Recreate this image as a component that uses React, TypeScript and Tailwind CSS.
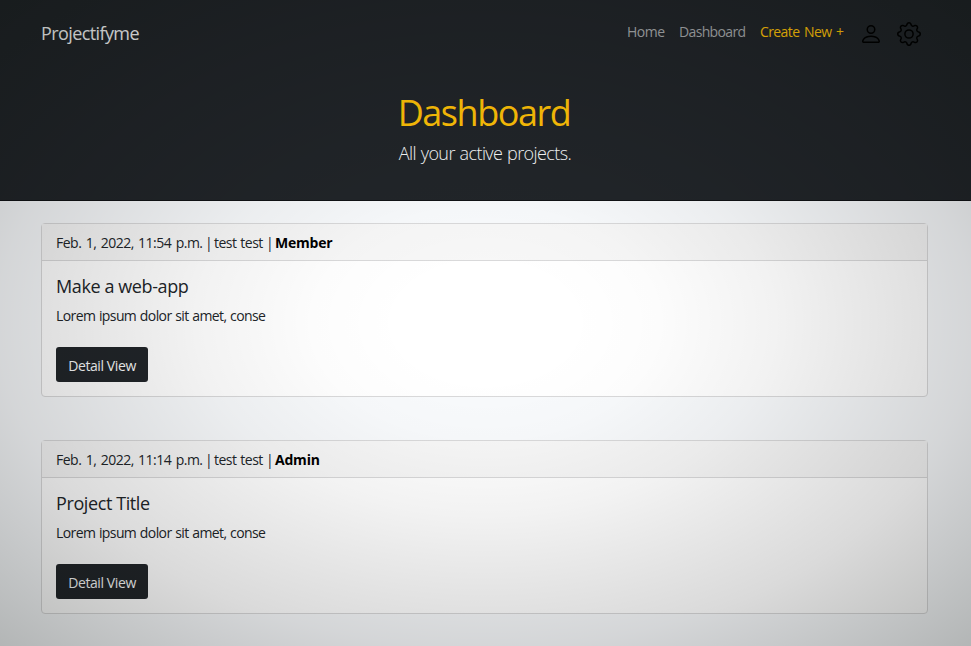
import { BsGear, BsPerson } from "react-icons/bs";

type Project = { date: string; owner: string; role: string; title: string };

const projects: Project[] = [
  { date: "Feb. 1, 2022, 11:54 p.m.", owner: "test test", role: "Member", title: "Make a web-app" },
  { date: "Feb. 1, 2022, 11:14 p.m.", owner: "test test", role: "Admin", title: "Project Title" },
];

function Header() {
  return (
    <header className="h-[201px] border-b border-[#101215] bg-[#212529] pl-[41px] pr-[50px]">
      <nav className="flex h-[66px] items-center justify-between">
        <a className="text-[18px] leading-[27px] tracking-[-0.6px] whitespace-nowrap text-[#f8f9fa]">Projectifyme</a>
        <div className="flex items-center text-[14px] leading-[21px] tracking-[-0.5px] whitespace-nowrap text-[#a5a8aa]">
          <a className="mb-[3px] w-[52px]">Home</a>
          <a className="mb-[3px] w-[81px] tracking-[-0.65px]">Dashboard</a>
          <a className="mb-[3px] w-[99px] tracking-[-0.6px] text-[#ffc107] [word-spacing:1.5px]">Create New +</a>
          <BsPerson className="mt-[2px] mr-[14px] size-6 text-black" />
          <BsGear className="mt-[2px] size-6 text-black" />
        </div>
      </nav>
      <div className="relative left-[3px] flex flex-col items-center pt-[22px]">
        <h1 className="text-[36px] leading-[50px] tracking-[-1.45px] whitespace-nowrap text-[#ffc107]">Dashboard</h1>
        <p className="relative left-[1px] mt-[2px] text-[18px] leading-[27px] font-light tracking-[-0.6px] whitespace-nowrap text-[#f8f9fa] [word-spacing:0.7px]">
          All your active projects.
        </p>
      </div>
    </header>
  );
}

function ProjectCard({ project }: { project: Project }) {
  return (
    <article className="h-[174px] rounded-[4px] border border-[#d9d9da] bg-white">
      <div className="flex h-[37px] items-center border-b border-[#d9d9da] bg-[#f7f7f7] px-[14px] pt-[1px] text-[14px] leading-[21px] whitespace-pre">
        <span className="w-[150px] tracking-[-0.5px] [word-spacing:1.2px]">{project.date}</span>
        <span className="w-[8px] -translate-x-[1px]">|</span>
        <span className="w-[53px] tracking-[-0.5px] [word-spacing:0.7px]">{project.owner}</span>
        <span className="w-[8px] -translate-x-[1px]">|</span>
        <b className="font-bold tracking-[-0.2px] text-black">{project.role}</b>
      </div>
      <div className="px-[14px] pt-[13px]">
        <h2 className="text-[18px] leading-[25px] tracking-[-0.4px]">{project.title}</h2>
        <p className="mt-[6px] text-[14px] leading-[21px] tracking-[-0.6px] [word-spacing:0.6px]">Lorem ipsum dolor sit amet, conse</p>
        <button className="mt-[21px] flex h-[35px] w-[92px] items-center justify-center rounded-[3px] bg-[#212529] pt-[2px] text-[14px] tracking-[-0.4px] whitespace-nowrap text-[#f8f9fa]">
          Detail View
        </button>
      </div>
    </article>
  );
}

export default function App() {
  return (
    <div className="relative h-[646px] w-[971px] overflow-hidden bg-[#f8fafc] font-['Open_Sans','Noto_Sans',sans-serif] text-[#212529]">
      <Header />
      <main className="flex flex-col gap-[43px] pt-[22px] pr-[43px] pl-[41px]">
        {projects.map((project) => (
          <ProjectCard key={project.role} project={project} />
        ))}
      </main>
      <div className="pointer-events-none absolute inset-0 bg-[radial-gradient(ellipse_farthest-corner,transparent_12%,rgba(0,0,0,0.012)_25%,rgba(0,0,0,0.05)_42%,rgba(0,0,0,0.145)_71%,rgba(0,5,0,0.28)_100%)]" />
    </div>
  );
}
